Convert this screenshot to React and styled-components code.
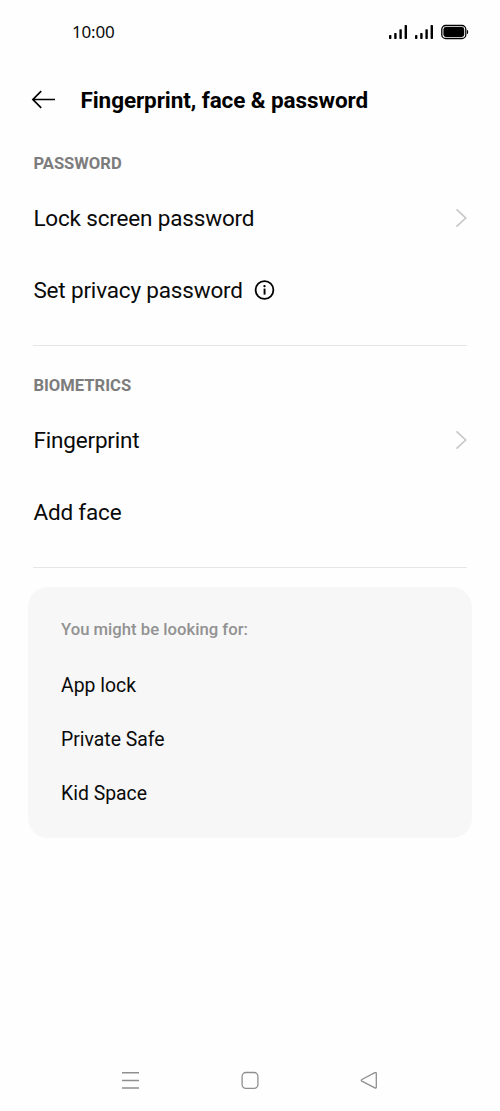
import React from 'react';
import styled, { createGlobalStyle } from 'styled-components';

const GlobalStyle = createGlobalStyle`
  * { box-sizing: border-box; }
  body { margin: 0; background: #fefefe; }
`;

const Screen = styled.div`
  display: flex;
  flex-direction: column;
  width: 500px;
  height: 1111px;
  background: #fefefe;
  color: #0a0a0a;
  font-family: Roboto, sans-serif;
  svg { display: block; flex: none; }
`;

const StatusBar = styled.header`
  display: flex;
  align-items: center;
  justify-content: space-between;
  height: 64px;
  padding: 0 31px 0 72px;
`;

const Clock = styled.span`
  font-family: 'Noto Sans', sans-serif;
  font-size: 17px;
  line-height: 24px;
  letter-spacing: -0.2px;
`;

const StatusIcons = styled.div`
  display: flex;
  gap: 8px;
`;

const TitleBar = styled.div`
  display: flex;
  align-items: center;
  gap: 24.5px;
  height: 72px;
  padding: 0 32px 0 31px;
`;

const Title = styled.h1`
  margin: 0;
  padding-bottom: 1px;
  font-size: 22.5px;
  line-height: 30px;
  font-weight: 700;
  letter-spacing: -0.09px;
  color: #000;
`;

const Section = styled.section`
  height: ${(p) => p.$height}px;
  margin: 0 33px;
  padding-top: ${(p) => p.$top}px;
  border-bottom: 1px solid #e6e6e6;
`;

const SectionLabel = styled.h2`
  margin: 0;
  padding-left: 0.4px;
  font-size: 16.6px;
  line-height: 20px;
  font-weight: 700;
  color: #7c7c7c;
`;

const Rows = styled.div`
  padding-top: 8px;
`;

const Row = styled.div`
  display: flex;
  align-items: center;
  justify-content: space-between;
  height: 72px;
`;

const RowLabel = styled.span`
  display: flex;
  align-items: center;
  gap: 11px;
  padding-left: 0.4px;
  font-size: 22.5px;
  line-height: 30px;
  letter-spacing: -0.17px;
`;

const RowText = styled.span`
  padding-bottom: 1px;
`;

const Card = styled.section`
  height: 251px;
  margin: 19px 28px 0;
  padding: 33px 33px 0;
  border-radius: 20px;
  background: #f7f7f7;
`;

const CardHeading = styled.h3`
  margin: 0 0 18px;
  font-size: 16.7px;
  line-height: 20px;
  font-weight: 500;
  color: #929292;
`;

const CardLink = styled.div`
  display: flex;
  align-items: center;
  height: 54px;
  font-size: 19.4px;
`;

const NavBar = styled.nav`
  display: flex;
  justify-content: space-between;
  margin-top: auto;
  padding: 0 121px 21px 120px;
`;

const Signal = () => (
  <svg width="18" height="16" viewBox="0 0 18 16" fill="#000">
    <rect x="0" y="11" width="2.4" height="4" rx=".7" />
    <rect x="5.2" y="9" width="2.4" height="6" rx=".7" />
    <rect x="10.4" y="5.3" width="2.4" height="9.7" rx=".7" />
    <rect x="15.6" y="1" width="2.4" height="14" rx=".7" />
  </svg>
);

const Battery = () => (
  <svg width="28" height="16" viewBox="0 0 28 16">
    <rect x=".8" y="1.5" width="24" height="13" rx="3.8" fill="none" stroke="#000" strokeWidth="1.3" />
    <rect x="2.4" y="3" width="20.8" height="10" rx="2.4" fill="#000" />
    <path d="M26 5.8q1.2.4 1.2 2.2T26 10.2z" fill="#000" />
  </svg>
);

const BackArrow = () => (
  <svg width="25" height="20" viewBox="0 0 25 20" fill="none" stroke="#000" strokeWidth="1.7">
    <path d="M1.8 9.5H24M10.2 1.2 1.9 9.5l8.3 8.3" />
  </svg>
);

const Info = () => (
  <svg width="21" height="21" viewBox="0 0 21 21">
    <circle cx="10.5" cy="10" r="8.9" fill="none" stroke="#000" strokeWidth="1.8" />
    <circle cx="10.5" cy="6.1" r="1.2" fill="#000" />
    <path d="M9.6 8.6h1.9v6H9.6z" fill="#000" />
  </svg>
);

const Chevron = () => (
  <svg width="12" height="20" viewBox="0 0 12 20" fill="none" stroke="#c8c8c8" strokeWidth="1.7">
    <path d="M1.5 1.3 10.7 10l-9.2 8.7" />
  </svg>
);

const MenuIcon = () => (
  <svg width="20" height="20" viewBox="0 0 20 20" fill="none" stroke="#8f8f8f" strokeWidth="1.5">
    <path d="M2 2.7h17M2 10.4h17M2 18h17" />
  </svg>
);

const HomeIcon = () => (
  <svg width="20" height="20" viewBox="0 0 20 20" fill="none" stroke="#8f8f8f" strokeWidth="1.3">
    <rect x="2.1" y="2.5" width="15.8" height="15.8" rx="3.8" />
  </svg>
);

const BackIcon = () => (
  <svg width="20" height="20" viewBox="0 0 20 20" fill="none" stroke="#8f8f8f" strokeWidth="1.3">
    <path d="M2.8 9.5 15.9 2.7q1.4-.6 1.4 1v13.3q0 1.6-1.4.9L2.8 11.1q-1.1-.8 0-1.6z" />
  </svg>
);

export default function App() {
  return (
    <>
      <GlobalStyle />
      <Screen>
        <StatusBar>
          <Clock>10:00</Clock>
          <StatusIcons>
            <Signal />
            <Signal />
            <Battery />
          </StatusIcons>
        </StatusBar>
        <TitleBar>
          <BackArrow />
          <Title>Fingerprint, face &amp; password</Title>
        </TitleBar>
        <Section $height={210} $top={18}>
          <SectionLabel>PASSWORD</SectionLabel>
          <Rows>
            <Row>
              <RowLabel><RowText>Lock screen password</RowText></RowLabel>
              <Chevron />
            </Row>
            <Row>
              <RowLabel>
                <RowText>Set privacy password</RowText>
                <Info />
              </RowLabel>
            </Row>
          </Rows>
        </Section>
        <Section $height={222} $top={30}>
          <SectionLabel>BIOMETRICS</SectionLabel>
          <Rows>
            <Row>
              <RowLabel><RowText>Fingerprint</RowText></RowLabel>
              <Chevron />
            </Row>
            <Row>
              <RowLabel><RowText>Add face</RowText></RowLabel>
            </Row>
          </Rows>
        </Section>
        <Card>
          <CardHeading>You might be looking for:</CardHeading>
          <CardLink>App lock</CardLink>
          <CardLink>Private Safe</CardLink>
          <CardLink>Kid Space</CardLink>
        </Card>
        <NavBar>
          <MenuIcon />
          <HomeIcon />
          <BackIcon />
        </NavBar>
      </Screen>
    </>
  );
}
